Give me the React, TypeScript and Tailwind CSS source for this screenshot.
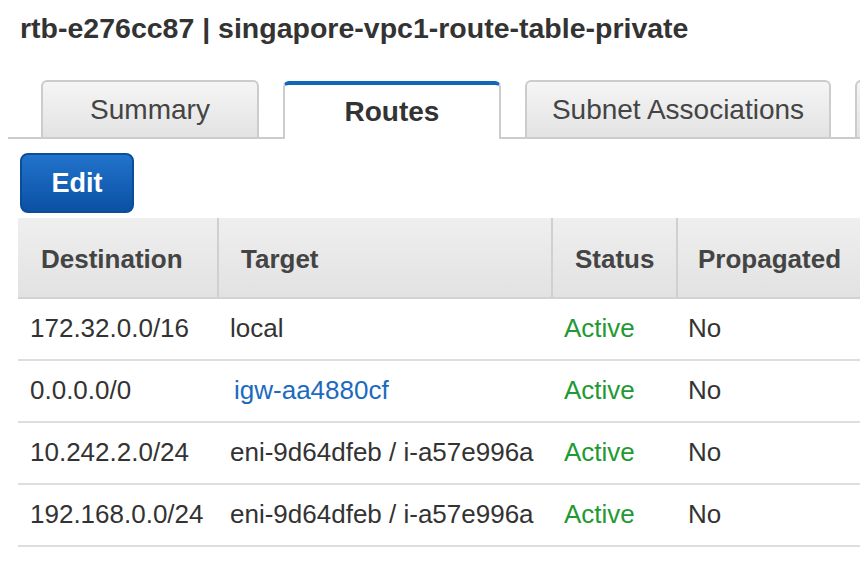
import React from 'react';

interface Route {
  destination: string;
  target: string;
  link?: boolean;
  status: string;
  propagated: string;
}

const routes: Route[] = [
  { destination: '172.32.0.0/16', target: 'local', status: 'Active', propagated: 'No' },
  { destination: '0.0.0.0/0', target: 'igw-aa4880cf', link: true, status: 'Active', propagated: 'No' },
  { destination: '10.242.2.0/24', target: 'eni-9d64dfeb / i-a57e996a', status: 'Active', propagated: 'No' },
  { destination: '192.168.0.0/24', target: 'eni-9d64dfeb / i-a57e996a', status: 'Active', propagated: 'No' },
];

// last tab is only partly on screen, its label falls past the edge
const tabs = [
  { label: 'Summary', width: 'w-[218px]' },
  { label: 'Routes', width: 'w-[218px]', active: true },
  { label: 'Subnet Associations', width: 'w-[306px]' },
  { label: '', width: 'w-[306px]' },
];

const App: React.FC = () => {
  return (
    <div className="w-[860px] h-[562px] overflow-hidden bg-white font-['Liberation_Sans',Arial,sans-serif]">
      {/* Title */}
      <h1 className="pt-[12px] pl-[20px] text-[28.5px] leading-[32px] font-bold text-[#333] whitespace-nowrap">
        rtb-e276cc87 | singapore-vpc1-route-table-private
      </h1>

      {/* Tabs */}
      <div className="mt-[36px] ml-[8px] flex items-end gap-[24px] pl-[33px] border-b-2 border-[#cccccc] h-[59px]">
        {tabs.map((tab, i) =>
          tab.active ? (
            <div
              key={i}
              className={`${tab.width} shrink-0 h-[58px] -mb-[2px] flex items-center justify-center bg-white border-2 border-b-0 border-[#cccccc] border-t-[4px] border-t-[#1166bb] rounded-t-[6px] text-[28px] font-bold text-[#333]`}
            >
              {tab.label}
            </div>
          ) : (
            <div
              key={i}
              className={`${tab.width} shrink-0 h-[57px] flex items-center justify-center bg-gradient-to-b from-[#f5f5f5] to-[#e3e3e3] border-2 border-b-0 border-[#cccccc] rounded-t-[6px] text-[28px] text-[#444] whitespace-nowrap`}
            >
              {tab.label}
            </div>
          )
        )}
      </div>

      {/* Edit button */}
      <div className="mt-[14px] pl-[20px]">
        <button className="w-[114px] h-[60px] rounded-[8px] border-2 border-[#0c4d99] bg-gradient-to-b from-[#2173cc] to-[#0b51a4] text-white text-[27px] font-bold">
          Edit
        </button>
      </div>

      {/* Table */}
      <div className="mt-[5px] ml-[18px] w-[842px]">
        <div className="grid grid-cols-[199px_334px_125px_1fr] h-[81px] bg-gradient-to-b from-[#efefef] to-[#e2e2e2] border-b-2 border-[#d2d2d2] text-[26px] font-bold text-[#444]">
          <div className="flex items-center pt-[4px] pl-[23px]">Destination</div>
          <div className="flex items-center pt-[4px] pl-[22px] border-l-2 border-[#d0d0d0]">Target</div>
          <div className="flex items-center pt-[4px] pl-[22px] border-l-2 border-[#d0d0d0]">Status</div>
          <div className="flex items-center pt-[4px] pl-[20px] border-l-2 border-[#d0d0d0] whitespace-nowrap">Propagated</div>
        </div>
        {routes.map((r) => (
          <div
            key={r.destination}
            className="grid grid-cols-[199px_334px_125px_1fr] h-[62px] border-b-2 border-[#dedede] text-[26px] text-[#333]"
          >
            <div className="flex items-center pb-[1px] pl-[12px] whitespace-nowrap">{r.destination}</div>
            <div className="flex items-center pb-[1px] pl-[13px] whitespace-nowrap">
              {r.link ? <span className="ml-[4px] text-[#1b6ac0]">{r.target}</span> : r.target}
            </div>
            <div className="flex items-center pb-[1px] pl-[13px] text-[#1f9a34]">{r.status}</div>
            <div className="flex items-center pb-[1px] pl-[12px]">{r.propagated}</div>
          </div>
        ))}
      </div>
    </div>
  );
};

export default App;
